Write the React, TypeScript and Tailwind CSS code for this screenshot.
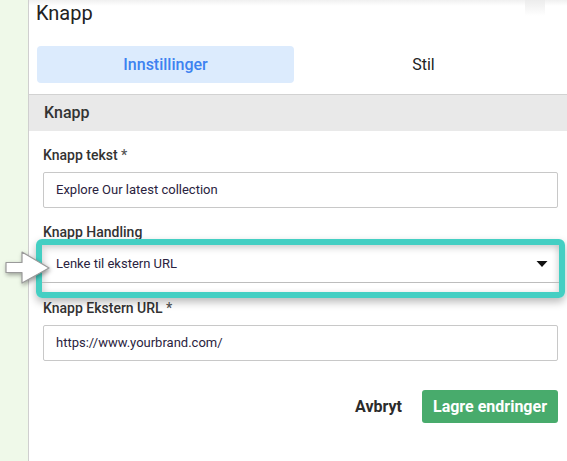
import React from "react";

function Label({ text, required }: { text: string; required?: boolean }) {
  return (
    <div className="text-[14px] font-medium text-[#333] leading-[18px]">
      {text}
      {required && <span className="text-[#555]"> *</span>}
    </div>
  );
}

function TextInput({ value }: { value: string }) {
  return (
    <div className="mt-[8px] h-[36px] border border-[#c8c8c8] rounded-[2px] flex items-center px-[12px] text-[13px] text-[#2a2340]">
      {value}
    </div>
  );
}

function PointerArrow() {
  return (
    <svg width="50" height="36" viewBox="0 0 50 36" className="drop-shadow-[1px_2px_2px_rgba(0,0,0,0.35)]">
      <path
        d="M2 12.5 L18 12.5 L18 2 L45 18 L18 33 L18 22.5 L2 22.5 Z"
        fill="#ffffff"
        stroke="#9a9a9a"
        strokeWidth="1.2"
        strokeLinejoin="round"
      />
    </svg>
  );
}

export default function App() {
  return (
    <div
      className="w-[567px] h-[461px] flex overflow-hidden bg-white"
      style={{ fontFamily: "Roboto, 'Liberation Sans', sans-serif" }}
    >
      <div className="w-[29px] shrink-0 bg-[#eff9e9] border-r border-[#cfcfcf]" />
      <div className="relative flex-1 bg-white">
        <div className="absolute inset-x-0 top-0 h-[6px] bg-gradient-to-b from-[#f0f0f0] to-white" />
        <div className="absolute top-0 right-[22px] w-[20px] h-[16px] bg-gradient-to-b from-[#ececec] to-white" />
        <div className="relative pt-[1px] pl-[7px] text-[20px] leading-[24px] text-[#222]">Knapp</div>

        <div className="flex pl-[8px] pr-[14px] mt-[21px]">
          <div className="w-[257px] h-[37px] rounded-[4px] bg-[#dcebfd] flex items-center justify-center text-[16px] font-medium text-[#3d82f0]">
            Innstillinger
          </div>
          <div className="flex-1 h-[37px] flex items-center justify-center text-[16px] text-[#222]">Stil</div>
        </div>

        <div className="mt-[11px] border-t border-[#d2d2d2] bg-[#e9e9e9] h-[37px] flex items-center px-[15px] text-[16px] font-medium text-[#333]">
          Knapp
        </div>

        <div className="pt-[15px] pl-[14px] pr-[9px]">
          <Label text="Knapp tekst" required />
          <TextInput value="Explore Our latest collection" />

          <div className="mt-[15px]">
            <Label text="Knapp Handling" />
          </div>
          <div className="relative mt-[4px] -mx-[1px] h-[47px]">
            <div className="absolute -inset-[6px] border-[6px] border-[#44cfc3] rounded-[6px] shadow-[0_4px_9px_rgba(0,0,0,0.28)]" />
            <div className="relative h-full bg-white shadow-[inset_3px_4px_6px_rgba(0,0,0,0.13),inset_-3px_0_5px_rgba(0,0,0,0.1)]">
              <div className="h-[38px] border-b border-[#bdbdbd] flex items-center justify-between pl-[14px] pr-[11px] text-[13px] text-[#2a2340]">
                <span>Lenke til ekstern URL</span>
                <svg width="12" height="8" viewBox="0 0 12 8">
                  <path d="M0.5 1 L11.5 1 L6 7 Z" fill="#111" />
                </svg>
              </div>
            </div>
            <div className="absolute -left-[38px] top-[5px]">
              <PointerArrow />
            </div>
          </div>

          <div className="mt-[7px]">
            <Label text="Knapp Ekstern URL" required />
          </div>
          <TextInput value="https://www.yourbrand.com/" />

          <div className="flex justify-end items-center gap-[20px] mt-[29px]">
            <span className="text-[16px] font-bold text-[#2b2b2b]">Avbryt</span>
            <div className="h-[33px] px-[11px] rounded-[3px] bg-[#48ab6c] flex items-center text-[16px] font-bold text-white">
              Lagre endringer
            </div>
          </div>
        </div>
      </div>
    </div>
  );
}
